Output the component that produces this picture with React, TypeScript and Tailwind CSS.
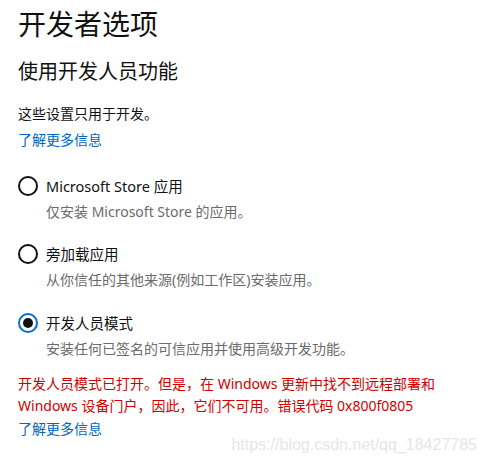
import React from 'react';

const font = { fontFamily: '"Noto Sans", "Noto Sans CJK SC", sans-serif' };

function Radio({ checked, label, desc, className }: { checked?: boolean; label: string; desc: string; className: string }) {
  return (
    <div className={className}>
      <div className="flex items-center h-5">
        {checked ? (
          <span className="w-5 h-5 rounded-full border-2 border-[#0070cc] flex items-center justify-center">
            <span className="w-[10px] h-[10px] rounded-full bg-[#111]" />
          </span>
        ) : (
          <span className="w-5 h-5 rounded-full border-2 border-[#111]" />
        )}
        <span className="ml-[8px] text-[14.5px] leading-5 text-[#111]">{label}</span>
      </div>
      <div className="mt-[6px] pl-[28px] text-[14px] leading-5 text-[#6b6b6b]">{desc}</div>
    </div>
  );
}

export default function App() {
  return (
    <div className="relative w-[487px] h-[462px] bg-white pl-[18px] pt-[6px] overflow-hidden" style={font}>
      <h1 className="text-[28px] leading-9 text-[#111]">开发者选项</h1>
      <h2 className="mt-[16px] text-[20px] leading-7 text-[#111]">使用开发人员功能</h2>
      <p className="mt-[18px] text-[14px] leading-5 text-[#111]">这些设置只用于开发。</p>
      <a className="block mt-[6px] text-[14px] leading-5 text-[#0067c0]">了解更多信息</a>

      <Radio className="mt-[26px]" label="Microsoft Store 应用" desc="仅安装 Microsoft Store 的应用。" />
      <Radio className="mt-[22px]" label="旁加载应用" desc="从你信任的其他来源(例如工作区)安装应用。" />
      <Radio className="mt-[23px]" checked label="开发人员模式" desc="安装任何已签名的可信应用并使用高级开发功能。" />

      <p className="mt-[14px] text-[14px] leading-[22px] text-[#d00000] w-[440px]">
        开发人员模式已打开。但是，在 Windows 更新中找不到远程部署和
        <br />
        Windows 设备门户，因此，它们不可用。错误代码 0x800f0805
      </p>
      <a className="block mt-[2px] text-[14px] leading-5 text-[#0067c0]">了解更多信息</a>

      <div className="absolute right-[10px] top-[435px] text-[16px] leading-5 text-[#e6e6e6]" style={{ fontFamily: '"Liberation Sans", sans-serif' }}>
        https://blog.csdn.net/qq_18427785
      </div>
    </div>
  );
}
